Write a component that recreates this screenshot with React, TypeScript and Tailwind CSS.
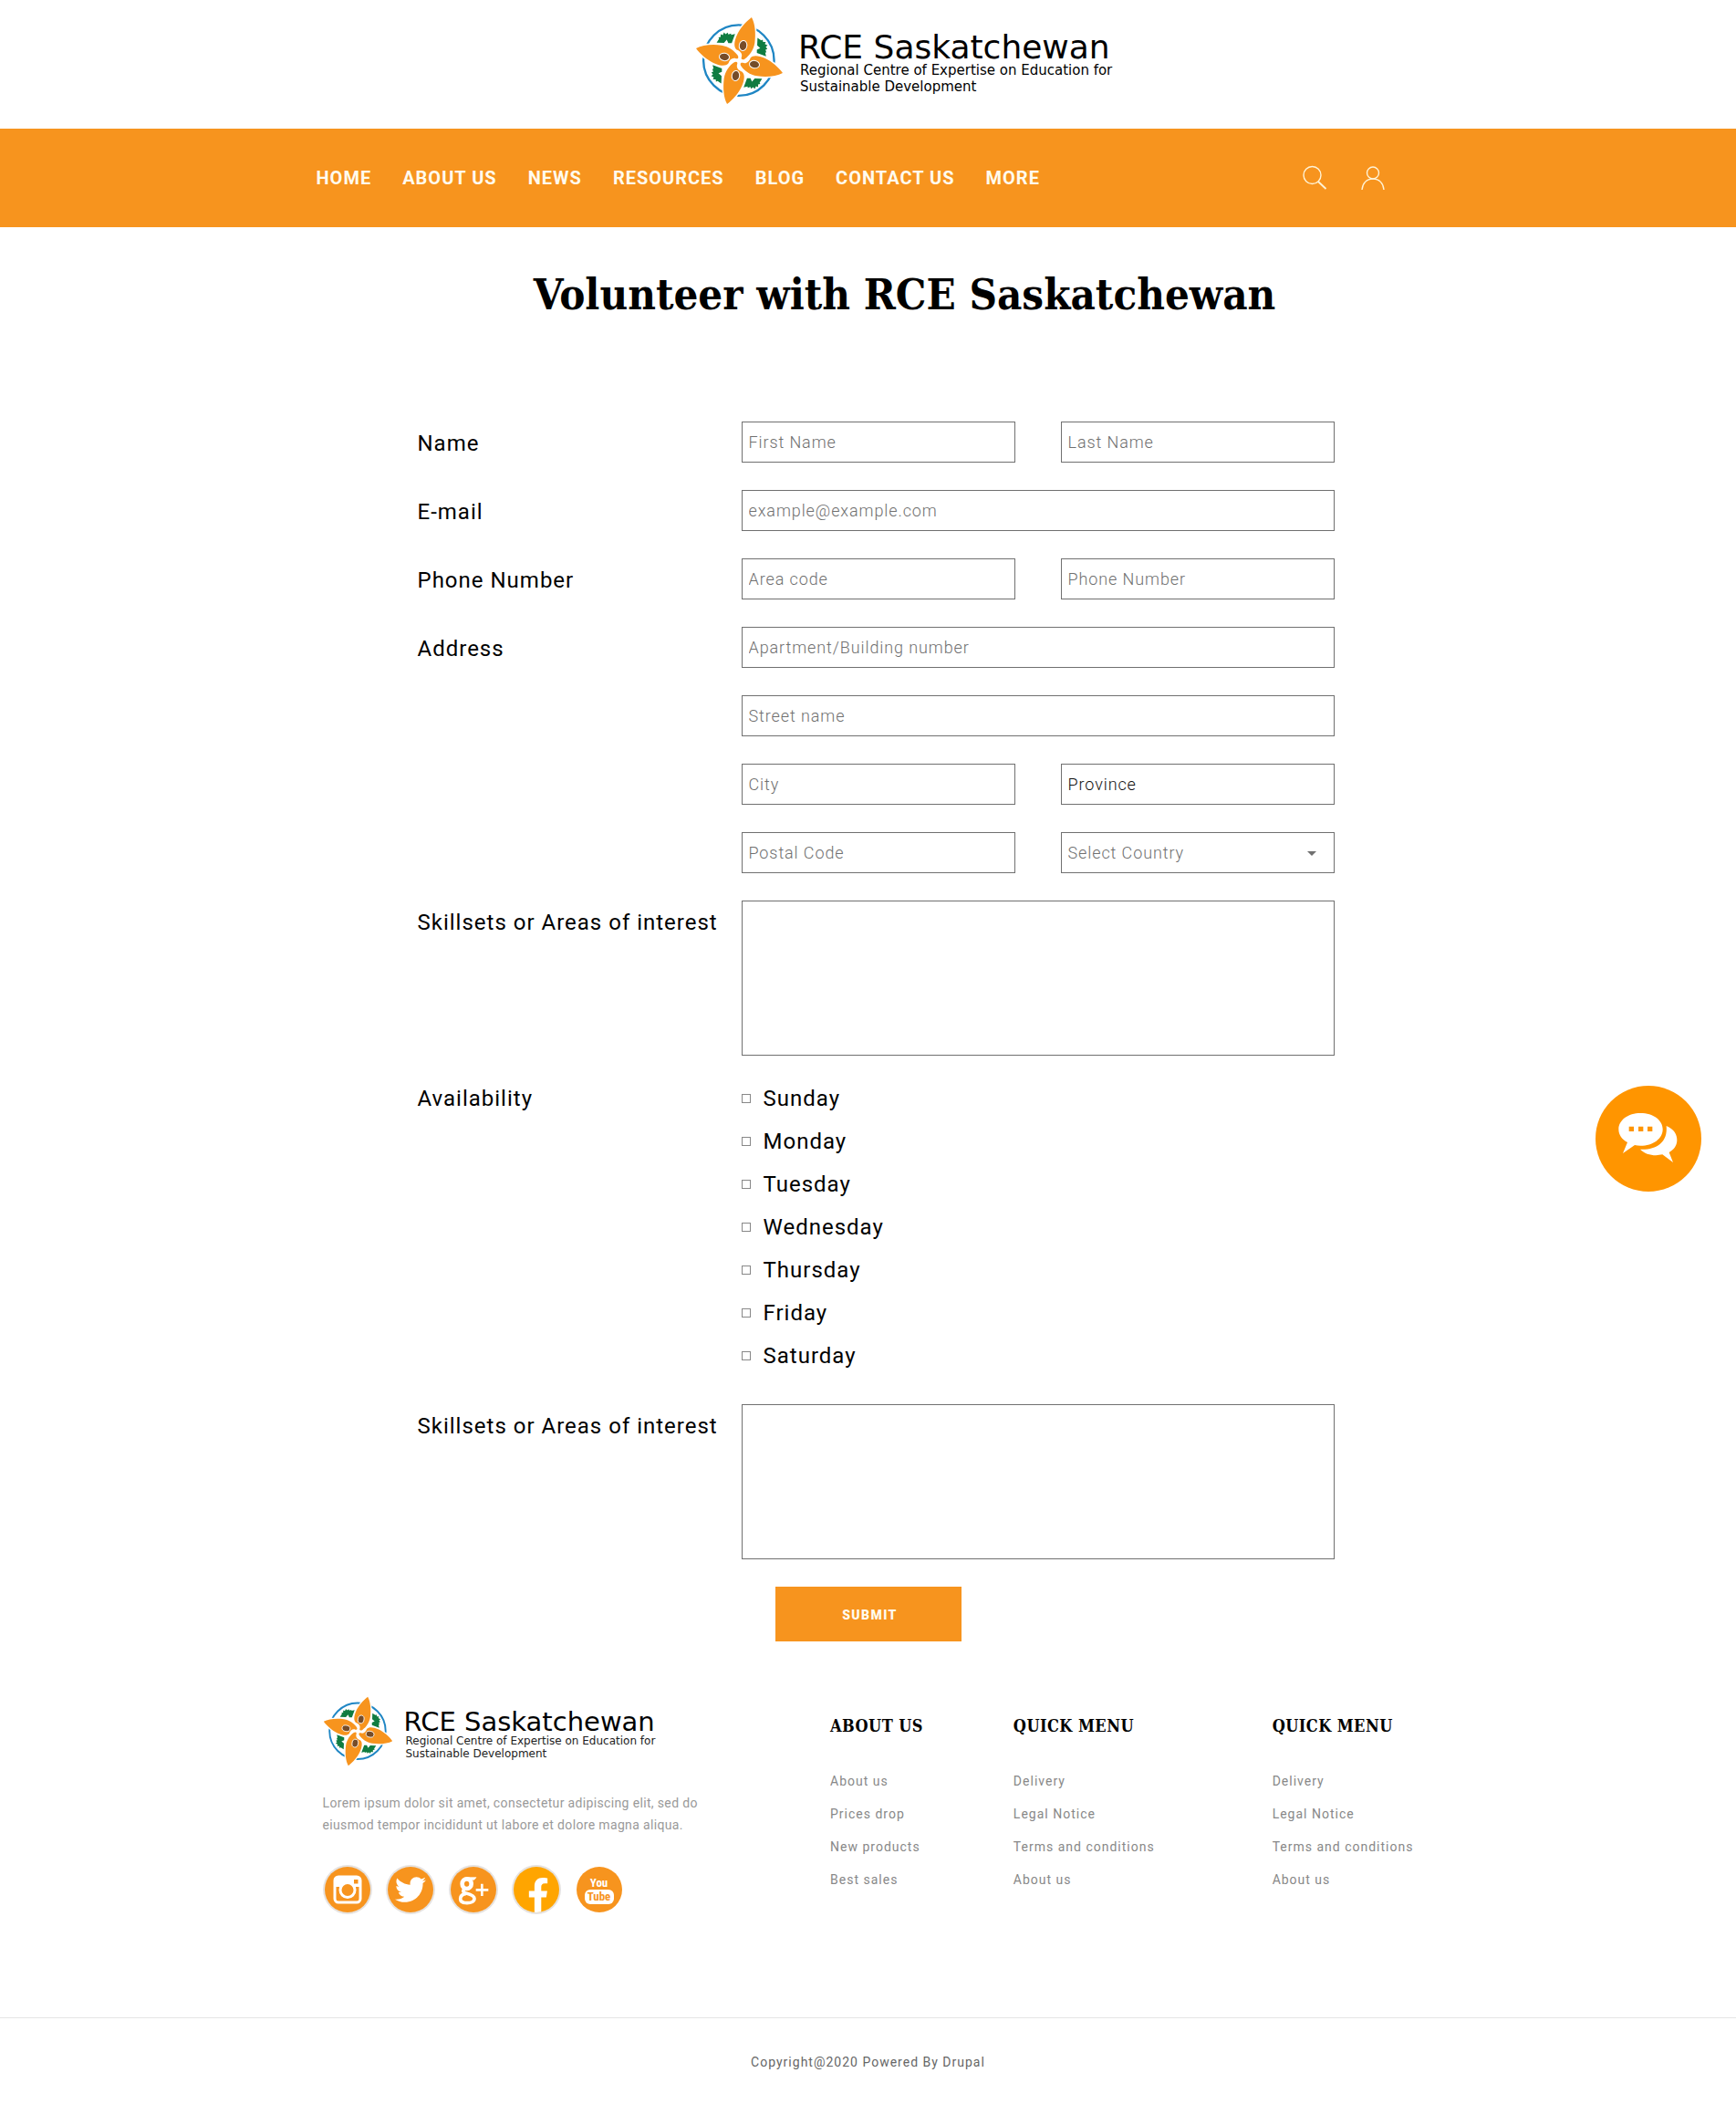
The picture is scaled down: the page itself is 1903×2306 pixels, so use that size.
import React from "react";
import { FaTwitter, FaFacebookF } from "react-icons/fa";

const navItems = ["HOME", "ABOUT US", "NEWS", "RESOURCES", "BLOG", "CONTACT US", "MORE"];
const days = ["Sunday", "Monday", "Tuesday", "Wednesday", "Thursday", "Friday", "Saturday"];
const footerColumns = [
  { title: "ABOUT US", links: ["About us", "Prices drop", "New products", "Best sales"] },
  { title: "QUICK MENU", links: ["Delivery", "Legal Notice", "Terms and conditions", "About us"] },
  { title: "QUICK MENU", links: ["Delivery", "Legal Notice", "Terms and conditions", "About us"] },
];
const slab = "font-['Roboto_Slab','DejaVu_Serif_Condensed','DejaVu_Serif',serif]";
const fieldClass =
  "h-[45px] w-full min-w-0 rounded-none border border-[#707070] bg-white px-[7px] text-lg font-light tracking-wider outline-none placeholder:text-[#707070] placeholder:opacity-100";
const labelClass = "text-2xl/[49px] tracking-[1px] whitespace-nowrap";

function Emblem({ className }: { className: string }) {
  const turns = [0, 90, 180, 270];
  return (
    <svg viewBox="40 53 288 288" className={className} aria-hidden="true">
      <circle cx="182" cy="196" r="115" fill="none" stroke="#1f86c4" strokeWidth="7" />
      {turns.map((a) => (
        <path
          key={a}
          transform={`rotate(${a} 184 197)`}
          d="M110 138l8-12-2-5 7-1 0-9 7 3 4-9 5 6 7-5 2 6 9-3 0 4 13-3-11 30-11 0-5-11-9 10z"
          fill="#107c41"
        />
      ))}
      {turns.map((a) => (
        <path
          key={a}
          transform={`rotate(${a} 184 197)`}
          d="M224 56C235 76 238 108 234 139C230 163 216 181 203 190C196 196 188 194 191 186C195 174 187 165 175 161C165 153 167 134 176 114C186 92 205 70 224 56Z"
          fill="#f7941e"
          stroke="#fff"
          strokeWidth="9"
          paintOrder="stroke"
        />
      ))}
      {turns.map((a) => (
        <g key={a} transform={`rotate(${a} 184 197)`}>
          <ellipse cx="196" cy="148" rx="12.5" ry="16.5" transform="rotate(10 196 148)" fill="#754c29" stroke="#fff" strokeWidth="3" />
        </g>
      ))}
    </svg>
  );
}

function SearchIcon() {
  return (
    <svg viewBox="0 0 28 28" className="size-7" fill="none" stroke="#fff3d6" strokeWidth="1.4" aria-hidden="true">
      <circle cx="11.5" cy="11" r="9.5" />
      <path d="M18 18l8.500 8" strokeWidth="1.800" />
    </svg>
  );
}

function UserIcon() {
  return (
    <svg viewBox="0 0 28 28" className="size-7" fill="none" stroke="#fff3d6" strokeWidth="1.4" aria-hidden="true">
      <circle cx="14" cy="8.500" r="6.500" />
      <path d="M2 27C2.500 20 7 15 14 15S25.500 20 26 27" />
    </svg>
  );
}

function InstagramIcon() {
  return (
    <svg viewBox="0 0 32 32" className="size-8" aria-hidden="true">
      <rect x="2" y="2" width="28" height="28" rx="4" fill="none" stroke="#fff" strokeWidth="3" />
      <path d="M2 6a4 4 0 0 1 4-4h20a4 4 0 0 1 4 4v7h-6a10 10 0 0 0-16 0H2z" fill="#fff" />
      <circle cx="16" cy="16.500" r="8" fill="#f7941e" stroke="#fff" strokeWidth="3" />
      <rect x="23" y="5" width="4.500" height="4.500" fill="#f7941e" />
    </svg>
  );
}

function GooglePlusIcon() {
  return (
    <svg viewBox="462 618 150 150" className="size-full" fill="none" stroke="#fff" aria-hidden="true">
      <ellipse cx="515" cy="674" rx="15" ry="16" strokeWidth="14" />
      <path d="M513 653H546L539 661H524Z" fill="#fff" strokeWidth="2" />
      <path d="M508 690C500 697 503 702 513 705C528 709 540 713 540 722C540 732 529 737 516 737C503 737 494 732 494 723C494 714 502 708 512 706" strokeWidth="11" />
      <path d="M545 694H586M565 674V714" strokeWidth="8" />
    </svg>
  );
}

function YouTubeIcon() {
  return (
    <span className="flex flex-col items-center font-['Roboto_Condensed','Liberation_Sans_Narrow','DejaVu_Sans_Condensed',sans-serif] font-bold">
      <span className="text-[13px]/[15px] text-white">You</span>
      <span className="flex h-4 w-8 items-center justify-center rounded-md bg-white text-[13px]/[16px] text-[#f7941e]">Tube</span>
    </span>
  );
}

const socials = [
  { name: "Instagram", tone: "bg-[#f7941e] ring-2 ring-[#e6e2df]", icon: <InstagramIcon /> },
  { name: "Twitter", tone: "bg-[#f7941e] ring-2 ring-[#e6e2df]", icon: <FaTwitter className="size-[34px] text-white" /> },
  { name: "Google Plus", tone: "bg-[#f7941e] ring-2 ring-[#e6e2df]", icon: <GooglePlusIcon /> },
  { name: "Facebook", tone: "bg-[#ffa500] ring-2 ring-[#e6e2df]", icon: <FaFacebookF className="mt-3 ml-1 size-[38px] text-white" /> },
  { name: "YouTube", tone: "bg-[#f7941e]", icon: <YouTubeIcon /> },
];

function Row({ label, htmlFor, children }: { label?: string; htmlFor?: string; children: React.ReactNode }) {
  return (
    <div className="grid grid-cols-[355fr_650fr]">
      {label ? (
        <label htmlFor={htmlFor} className={labelClass + " h-[45px]"}>
          {label}
        </label>
      ) : (
        <span />
      )}
      {children}
    </div>
  );
}

export default function App() {
  return (
    <div className="relative bg-white font-[Roboto,sans-serif] text-black">
      <header>
        <div className="mx-auto flex max-w-[1210px] justify-center pt-[18px] pb-[26px] pl-20">
          <a href="#" className="flex items-start gap-4 font-['DejaVu_Sans',sans-serif]">
            <Emblem className="size-[97px]" />
            <span className="flex flex-col pt-3">
              <span className="text-4xl/[44px]">RCE Saskatchewan</span>
              <span className="-mt-1.5 w-[346px] pl-0.5 text-[15px]/[18px]">
                Regional Centre of Expertise on Education for Sustainable Development
              </span>
            </span>
          </a>
        </div>
        <nav className="bg-[#f7941e]">
          <div className="mx-auto flex h-[108px] max-w-[1210px] items-center justify-between pr-[38px]">
            <ul className="flex gap-[34px] text-xl font-bold tracking-wider whitespace-nowrap text-[#fffbee]">
              {navItems.map((item) => (
                <li key={item}>
                  <a href="#">{item}</a>
                </li>
              ))}
            </ul>
            <div className="flex gap-9">
              <button aria-label="Search"><SearchIcon /></button>
              <button aria-label="Account"><UserIcon /></button>
            </div>
          </div>
        </nav>
      </header>

      <main className="mx-auto max-w-[1210px]">
        <h1 className={slab + " pt-10 pl-20 text-center text-[47px]/[68px] font-bold"}>Volunteer with RCE Saskatchewan</h1>
        <form className="flex flex-col gap-[30px] pt-[105px] pr-[94px] pl-[111px]" onSubmit={(e) => e.preventDefault()}>
          <Row label="Name" htmlFor="first">
            <div className="grid grid-cols-2 gap-[50px]">
              <input id="first" className={fieldClass} placeholder="First Name" />
              <input aria-label="Last Name" className={fieldClass} placeholder="Last Name" />
            </div>
          </Row>
          <Row label="E-mail" htmlFor="email">
            <input id="email" type="email" className={fieldClass} placeholder="example@example.com" />
          </Row>
          <Row label="Phone Number" htmlFor="area">
            <div className="grid grid-cols-2 gap-[50px]">
              <input id="area" className={fieldClass} placeholder="Area code" />
              <input aria-label="Phone Number" type="tel" className={fieldClass} placeholder="Phone Number" />
            </div>
          </Row>
          <Row label="Address" htmlFor="building">
            <input id="building" className={fieldClass} placeholder="Apartment/Building number" />
          </Row>
          <Row>
            <input aria-label="Street name" className={fieldClass} placeholder="Street name" />
          </Row>
          <Row>
            <div className="grid grid-cols-2 gap-[50px]">
              <input aria-label="City" className={fieldClass} placeholder="City" />
              <input aria-label="Province" className={fieldClass + " text-[#111111]"} defaultValue="Province" />
            </div>
          </Row>
          <Row>
            <div className="grid grid-cols-2 gap-[50px]">
              <input aria-label="Postal Code" className={fieldClass} placeholder="Postal Code" />
              <div className="relative">
                <select aria-label="Country" className={fieldClass + " appearance-none text-[#707070]"}>
                  <option>Select Country</option>
                  <option>Canada</option>
                </select>
                <svg viewBox="0 0 10 5" className="pointer-events-none absolute top-[21px] right-5 h-[5px] w-2.5" aria-hidden="true">
                  <path d="M0 0h10L5 5z" fill="#707070" />
                </svg>
              </div>
            </div>
          </Row>
          <Row label="Skillsets or Areas of interest" htmlFor="skills">
            <textarea id="skills" className="block h-[170px] w-full resize-none border border-[#707070] p-2 text-lg outline-none" />
          </Row>
          <div role="group" aria-labelledby="availability" className="grid grid-cols-[355fr_650fr] pt-px pb-[7px]">
            <span id="availability" className="text-2xl/[32px] tracking-[1px]">Availability</span>
            <ul className="flex flex-col gap-[15px]">
              {days.map((day) => (
                <li key={day}>
                  <label className="flex items-center gap-3.5 text-2xl/[32px] tracking-[1px]">
                    <input type="checkbox" className="size-2.5 appearance-none border border-[#888888] bg-white checked:bg-[#f7941e]" />
                    {day}
                  </label>
                </li>
              ))}
            </ul>
          </div>
          <Row label="Skillsets or Areas of interest" htmlFor="interests">
            <textarea id="interests" className="block h-[170px] w-full resize-none border border-[#707070] p-2 text-lg outline-none" />
          </Row>
          <div className="grid grid-cols-[355fr_650fr]">
            <button
              type="submit"
              className="col-start-2 ml-[37px] h-[60px] w-[204px] bg-[#f7941e] pt-0.5 pl-1 text-sm font-black tracking-widest text-[#fffbee]"
            >
              SUBMIT
            </button>
          </div>
        </form>
      </main>

      <footer className="pt-[60px]">
        <div className="mx-auto grid max-w-[1210px] grid-cols-[557fr_201fr_284fr_162fr] pl-[7px]">
          <div>
            <a href="#" className="flex items-start gap-3 font-['DejaVu_Sans',sans-serif]">
              <Emblem className="size-[77px]" />
              <span className="flex flex-col pt-2.5">
                <span className="text-[29px]/[36px]">RCE Saskatchewan</span>
                <span className="-mt-1 w-[290px] pl-0.5 text-xs/[14px] text-[#222222]">
                  Regional Centre of Expertise on Education for Sustainable Development
                </span>
              </span>
            </a>
            <p className="mt-7 max-w-[420px] text-sm/[24px] tracking-wide text-[#999999]">
              Lorem ipsum dolor sit amet, consectetur adipiscing elit, sed do eiusmod tempor incididunt ut labore et dolore magna aliqua.
            </p>
            <ul className="mt-[34px] flex gap-[19px] pl-0.5">
              {socials.map((s) => (
                <li key={s.name}>
                  <a href="#" aria-label={s.name} className={"flex size-[50px] items-center justify-center overflow-hidden rounded-full " + s.tone}>
                    {s.icon}
                  </a>
                </li>
              ))}
            </ul>
          </div>
          {footerColumns.map((col, i) => (
            <div key={i} className="pt-[19px] whitespace-nowrap">
              <h2 className={slab + " text-lg/[28px] font-bold tracking-wide"}>{col.title}</h2>
              <ul className="mt-7 text-sm/[36px] tracking-[1px] text-[#888888]">
                {col.links.map((link) => (
                  <li key={link}>
                    <a href="#">{link}</a>
                  </li>
                ))}
              </ul>
            </div>
          ))}
        </div>
        <div className="mt-[115px] border-t border-[#e5e5e5] pt-[35px] pb-[33px] text-center text-sm/[26px] tracking-[1px] text-[#666666]">
          Copyright@2020 Powered By Drupal
        </div>
      </footer>

      <button aria-label="Open chat" className="fixed top-1/2 right-[38px] mt-[37px] size-[116px] rounded-full bg-[#ff9500]">
        <svg viewBox="86 60 348 348" className="size-full" aria-hidden="true">
          <path d="M319 192C345 203 355 222 354 240C353 258 343 270 328 279L341 312L306 286C280 292 250 287 233 269C280 272 325 250 319 192Z" fill="#fff" />
          <path d="M234 150C276 150 307 173 307 203C307 234 275 257 234 257C227 257 221 256 215 255L176 282L191 246C173 236 162 221 162 203C162 173 193 150 234 150Z" fill="#fff" />
          <path d="M196 194h16v16h-16zM227 194h16v16h-16zM257 194h16v16h-16z" fill="#ff9500" />
        </svg>
      </button>
    </div>
  );
}
